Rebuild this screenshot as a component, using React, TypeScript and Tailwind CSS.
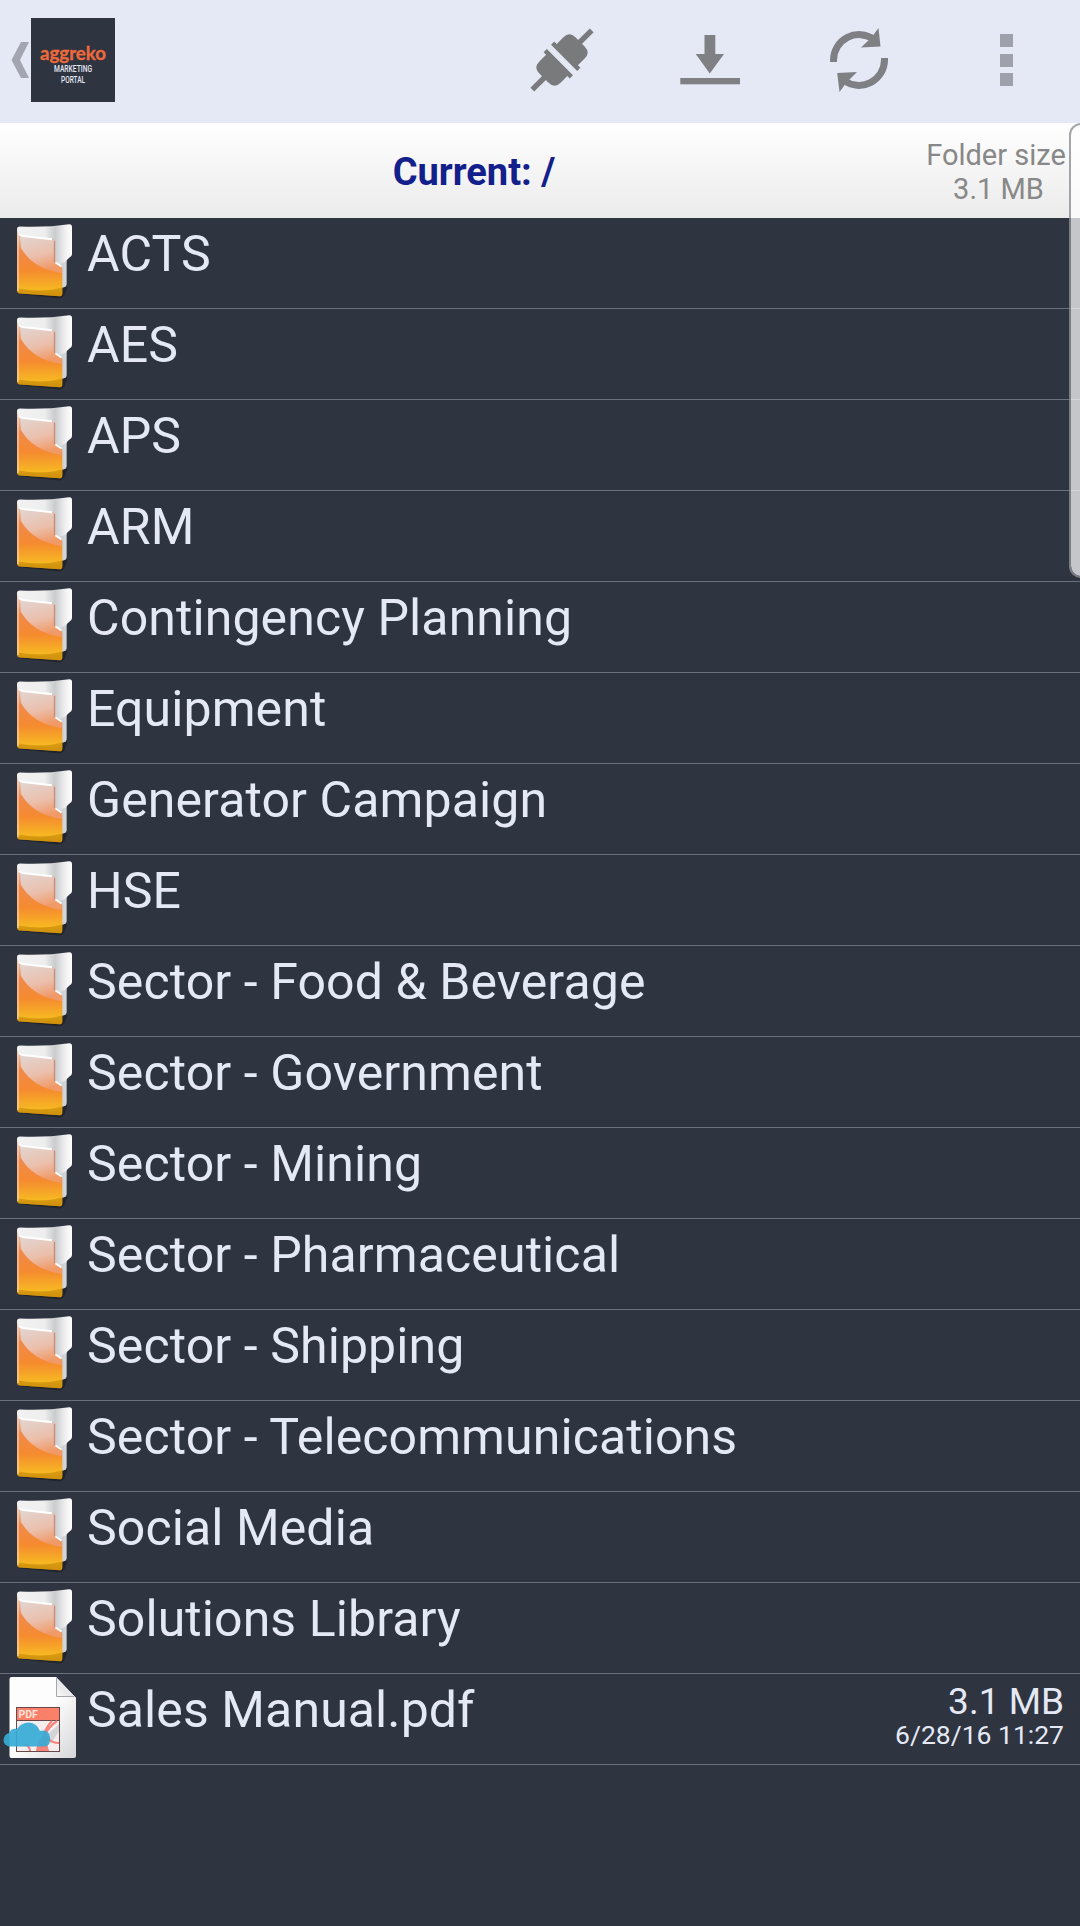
const folders = [
  "ACTS",
  "AES",
  "APS",
  "ARM",
  "Contingency Planning",
  "Equipment",
  "Generator Campaign",
  "HSE",
  "Sector - Food & Beverage",
  "Sector - Government",
  "Sector - Mining",
  "Sector - Pharmaceutical",
  "Sector - Shipping",
  "Sector - Telecommunications",
  "Social Media",
  "Solutions Library",
];

const Logo = () => {
  return (
    <svg width="84" height="84" viewBox="0 0 84 84" className="bg-[#2e3440]">
      <text x="9" y="41.500" textLength="66" lengthAdjust="spacingAndGlyphs" fill="#ee6a3a" className="font-[Lato,sans-serif] text-[19px] font-bold" stroke="#ee6a3a" strokeWidth="0.300">aggreko</text>
      <text x="23" y="54" textLength="38" lengthAdjust="spacingAndGlyphs" fill="#e6eaf5" className="font-[Roboto,sans-serif] text-[9px] font-medium">MARKETING</text>
      <text x="30" y="64.500" textLength="24" lengthAdjust="spacingAndGlyphs" fill="#e6eaf5" className="font-[Roboto,sans-serif] text-[9px] font-medium">PORTAL</text>
    </svg>
  );
};

const PlugIcon = () => {
  return (
    <svg width="64" height="64" viewBox="-32 -32 64 64" fill="#787a7c">
      <g transform="rotate(45)">
        <rect x="-2.7" y="-42" width="5.4" height="18" />
        <path d="M-18.5 -3V-7.5H-15V-17Q-15 -25.5 -6.500 -25.500H6.500Q15 -25.500 15 -17V-7.500H18.500V-3Z" />
        <path d="M-18.500 3V7.500H-15V17Q-15 25.500 -6.500 25.500H6.500Q15 25.500 15 17V7.500H18.500V3Z" />
        <rect x="-2.7" y="24" width="5.4" height="18" />
      </g>
    </svg>
  );
};

const DownloadIcon = () => {
  return (
    <svg width="60" height="50" viewBox="0 0 60 50" fill="#7e8083">
      <path d="M24.500 0H35.300V19H44L29.800 38.500L15.700 19H24.500Z" />
      <rect x="0.300" y="43" width="59.700" height="6.300" />
    </svg>
  );
};

const RefreshIcon = () => {
  return (
    <svg width="58" height="64" viewBox="0 0 58 64">
      <g fill="none" stroke="#7e8083" strokeWidth="7">
        <path d="M3.500 34V32A25.500 25.500 0 0 1 44 11.500" />
        <path d="M54.500 30V32A25.500 25.500 0 0 1 14 52.500" />
      </g>
      <path d="M48.500 0L50.500 18.500L31 19.500L41.500 9.500Z" fill="#7e8083" />
      <path d="M9.500 64L7.200 45L27 44L16.500 54.500Z" fill="#7e8083" />
    </svg>
  );
};

const FolderIcon = () => {
  return (
    <svg width="60" height="82" viewBox="0 0 60 82" className="block">
      <path d="M3 76L45 80.500L49 78L52 70L48 60Z" fill="#17181c" opacity="0.55" />
      <path d="M2 11Q2 8.500 5 8.500Q32 9.500 54 6.200Q57 6 57 9V36Q57 38 54.500 39.500Q51.500 41.500 51.500 44V66Q51.500 69 48 69.500L3 70Z" fill="url(#paper)" />
      <path d="M45 46L51.500 43V66Q51.500 69 48 69.500H45Z" fill="#b9bcc0" opacity="0.5" />
      <path d="M2 13Q3 18 7 17.500L37 21Q40 21.500 40 24V44.500L45.500 48Q47.300 49 47.300 51V75.500Q47.300 78.500 44.500 78.300L5 75.500Q2 75.300 2 72Z" fill="url(#orange)" />
      <path d="M5 18L37 21.500Q39.500 22 39.500 24V44.500L45.500 48Q47 49 47 51V55Q18 51 6 30Z" fill="url(#gloss)" />
      <path d="M3 70.500Q28 75 47.300 69.500V75.500Q47.300 78.300 44.500 78.300L5 75.500Q2.500 75.300 2.500 72Z" fill="#bd8205" opacity="0.55" />
      <path d="M3 73V14" fill="none" stroke="#fbdccb" strokeWidth="1.500" opacity="0.7" />
      <path d="M4 16Q5 17.500 8 18L37 21.300" fill="none" stroke="#fff" strokeWidth="2" />
      <path d="M39.500 23V44" stroke="#cf8872" strokeWidth="1.300" />
      <path d="M40.500 44.500L46.500 48.500" stroke="#fff" strokeWidth="1.700" />
    </svg>
  );
};

const PdfIcon = () => {
  return (
    <svg width="77" height="86" viewBox="0 0 77 86" className="block">
      <path d="M9.500 5Q9.500 3 11.500 3H56L76 24V82Q76 84 74 84H11.500Q9.500 84 9.500 82Z" fill="url(#sheet)" />
      <path d="M56 3V20Q56 22.500 59 22.500L76 24Z" fill="url(#fold)" />
      <path d="M56.500 4V22.500H74" fill="none" stroke="#a5a6aa" strokeWidth="1" />
      <rect x="16.500" y="33.500" width="43" height="44" fill="#f5eeef" stroke="#69484a" strokeWidth="1" />
      <rect x="17" y="34" width="42" height="12" fill="#fa8069" />
      <path d="M17 46.500H59" stroke="#69484a" />
      <text x="18.500" y="44" fill="#fde2dc" className="font-[Roboto,sans-serif] text-[10.500px] font-bold">PDF</text>
      <path d="M59 50L47 61L50 70L59 58Z" fill="#d3d4d8" />
      <path d="M45 60L50 64L47 69L49 77H36Q37 65 45 60Z" fill="#f8837a" />
      <path d="M57 47Q48 53 43 64M52 47Q47 52 44 60M47 64Q52 69 59 69M24 70Q30 72 30 77" fill="none" stroke="#f8837a" strokeWidth="2.200" />
      <path d="M9 72.500Q3.500 71 3.500 66Q4 60 9.500 59Q11 54 17 55Q21 48.500 29 48.500Q37 49 40 57Q49 55 50 63.500Q51 72.500 44 72.500Z" fill="#36abd6" opacity="0.92" />
    </svg>
  );
};

// gradients shared by all the file icons
const IconDefs = () => {
  return (
    <svg width="0" height="0" className="absolute">
      <defs>
        <linearGradient id="paper" x1="0" y1="0" x2="1" y2="0">
          <stop offset="0" stopColor="#f2f2f2" />
          <stop offset="0.5" stopColor="#eeeeee" />
          <stop offset="0.69" stopColor="#c9cbcd" />
          <stop offset="0.88" stopColor="#f0f0f1" />
          <stop offset="1" stopColor="#fff" />
        </linearGradient>
        <linearGradient id="orange" x1="0" y1="0" x2="0" y2="1">
          <stop offset="0" stopColor="#e6c8ba" />
          <stop offset="0.3" stopColor="#f08a4c" />
          <stop offset="0.6" stopColor="#f58a30" />
          <stop offset="0.9" stopColor="#f7b822" />
          <stop offset="1" stopColor="#e4a010" />
        </linearGradient>
        <linearGradient id="gloss" x1="0" y1="0" x2="0.3" y2="1">
          <stop offset="0" stopColor="#e2d6d3" />
          <stop offset="0.6" stopColor="#ebbfab" />
          <stop offset="1" stopColor="#f09a68" />
        </linearGradient>
        <linearGradient id="sheet" x1="0" y1="0" x2="1" y2="1">
          <stop offset="0.5" stopColor="#fdfdfd" />
          <stop offset="1" stopColor="#d5d6d8" />
        </linearGradient>
        <linearGradient id="fold" x1="0" y1="1" x2="1" y2="0">
          <stop offset="0" stopColor="#fff" />
          <stop offset="0.4" stopColor="#e8e8ea" />
          <stop offset="1" stopColor="#fff" />
        </linearGradient>
      </defs>
    </svg>
  );
};

const Toolbar = () => {
  return (
    <header className="flex h-[123px] items-start justify-between bg-[#e5e9f6] pl-[11px] pr-[67px]">
      <div className="flex items-start gap-[2px] pt-[18px]">
        <svg width="18" height="84" viewBox="0 0 18 84">
          <path d="M10 24H18L9 42L18 60H10L0.500 42Z" fill="#a3a6b0" />
        </svg>
        <Logo />
      </div>
      <div className="flex items-start">
        <div className="mr-[86px] pt-[28px]"><PlugIcon /></div>
        <div className="mr-[90px] pt-[35px]"><DownloadIcon /></div>
        <div className="mr-[112px] pt-[28px]"><RefreshIcon /></div>
        <div className="flex flex-col gap-[6.500px] pt-[34px]">
          <span className="size-[13px] bg-[#9ea1a9]"></span>
          <span className="size-[13px] bg-[#9ea1a9]"></span>
          <span className="size-[13px] bg-[#9ea1a9]"></span>
        </div>
      </div>
    </header>
  );
};

export default function App() {
  return (
    <div className="relative h-[1926px] w-[1080px] overflow-hidden bg-[#2e3440] font-[Roboto,sans-serif] text-[#e5e9f6]">
      <IconDefs />
      <Toolbar />
      <div className="flex h-[95px] bg-linear-to-b from-white to-[#ebebeb]">
        <h1 className="flex-1 pt-[25px] pl-[24px] text-center text-[38px] leading-[49px] font-bold text-[#13208c]">Current: /</h1>
        <div className="flex w-[156px] shrink-0 flex-col items-center pt-[15px] pr-[12px] text-[29px] leading-[34px] whitespace-nowrap text-[#888]">
          <p>Folder size</p>
          <p className="pl-[5px]">3.1 MB</p>
        </div>
      </div>

      <ul>
        {folders.map((name) => (
          <li key={name} className="flex h-[91px] border-b border-[#6b717c] pl-[15px]">
            <FolderIcon />
            <span className="pl-[12px] text-[50px] leading-[73px] tracking-[0.1px] whitespace-nowrap">{name}</span>
          </li>
        ))}
        <li className="flex h-[91px] border-b border-[#6b717c]">
          <PdfIcon />
          <span className="flex-1 pl-[10px] text-[50px] leading-[73px] tracking-[0.1px]">Sales Manual.pdf</span>
          <div className="pt-[8px] pr-[16px] text-right">
            <p className="text-[37px] leading-[40px]">3.1 MB</p>
            <p className="text-[26.500px] leading-[25px]">6/28/16 11:27</p>
          </div>
        </li>
      </ul>

      {/* fast scroll thumb */}
      <div className="absolute top-[123px] left-[1069px] h-[455px] w-[24px] rounded-[14px] border-2 border-[#8e9095]/80 bg-white/72 bg-clip-padding"></div>
    </div>
  );
}
